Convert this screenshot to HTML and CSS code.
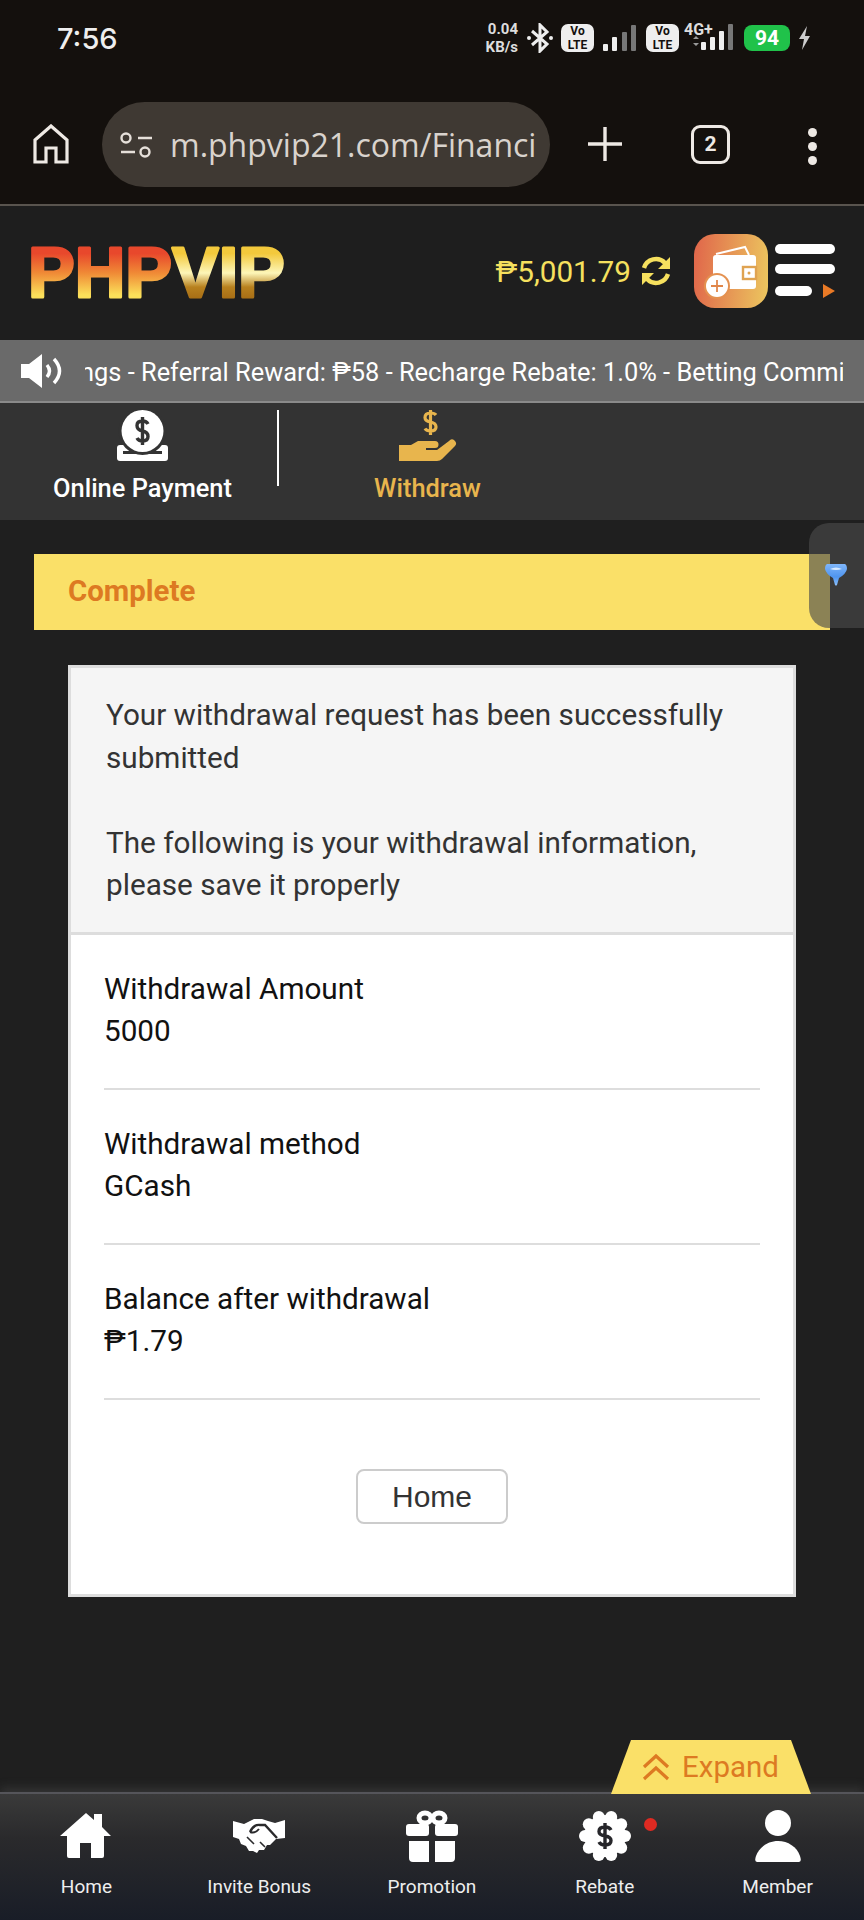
FILE: index.html
```html
<!DOCTYPE html>
<html lang="en">
<head>
<meta charset="UTF-8" />
<meta name="viewport" content="width=device-width, initial-scale=1" />
<title>PHPVIP - Withdraw</title>
<link rel="stylesheet" href="styles.css">
</head>
<body>

<div class="page">

  <!-- Phone status bar -->
  <div class="status-bar">
    <span class="clock">7:56</span>
    <div class="status-icons">
      <span class="net-speed">0.04<br>KB/s</span>
      <svg class="bt" width="28" height="30" viewBox="0 0 28 30"><path d="M6 8 L21 21 L14 28 V2 L21 9 L6 22" fill="none" stroke="#eee" stroke-width="3"/><circle cx="3" cy="15" r="2" fill="#eee"/><circle cx="25" cy="15" r="2" fill="#eee"/></svg>
      <span class="volte">Vo<br>LTE</span>
      <svg class="sig" width="33" height="26" viewBox="0 0 33 26"><rect x="0" y="19" width="5" height="7" rx="1" fill="#eee"/><rect x="9" y="12" width="5" height="14" rx="1" fill="#eee"/><rect x="19" y="7" width="5" height="19" rx="1" fill="#777"/><rect x="28" y="0" width="5" height="26" rx="1" fill="#777"/></svg>
      <span class="volte volte-2">Vo<br>LTE</span>
      <svg class="sig-4g" width="50" height="30" viewBox="0 0 50 30"><text x="0" y="14" class="sig-label">4G+</text><path d="M9 18 l3-3 3 3z M9 22 l3 3 3-3z" fill="#999"/><rect x="17" y="21" width="5" height="8" rx="1" fill="#eee"/><rect x="26" y="16" width="5" height="13" rx="1" fill="#eee"/><rect x="35" y="10" width="5" height="19" rx="1" fill="#eee"/><rect x="44" y="3" width="5" height="26" rx="1" fill="#777"/></svg>
      <span class="battery">94</span>
      <svg class="bolt" width="13" height="24" viewBox="0 0 13 24"><path d="M9 0 L1 13 H6 L4 24 L12 10 H7 Z" fill="#ccc"/></svg>
    </div>
  </div>

  <!-- Browser toolbar -->
  <div class="browser-bar">
    <svg class="b-home" width="36" height="40" viewBox="0 0 36 40"><path d="M2 16 L18 2 L34 16 V38 H23 V24 H13 V38 H2 Z" fill="none" stroke="#eee9e4" stroke-width="3.2"/></svg>
    <div class="url-pill">
      <svg width="32" height="26" viewBox="0 0 32 26"><circle cx="6" cy="6" r="4.5" fill="none" stroke="#e6e0da" stroke-width="2.4"/><path d="M18 6 H32 M1 20 H15" stroke="#e6e0da" stroke-width="2.6"/><circle cx="25" cy="20" r="4.5" fill="none" stroke="#e6e0da" stroke-width="2.4"/></svg>
      <span class="url-text">m.phpvip21.com/Financi</span>
    </div>
    <svg class="b-plus" width="34" height="34" viewBox="0 0 34 34"><path d="M17 0 V34 M0 17 H34" stroke="#eee9e4" stroke-width="3.4" stroke-linecap="round"/></svg>
    <span class="tab-count">2</span>
    <span class="b-dots"><i></i><i></i><i></i></span>
  </div>

  <!-- Site header -->
  <header class="site-header">
    <svg class="logo" width="262" height="84" viewBox="0 0 262 84">
      <defs>
        <linearGradient id="phpGrad" x1="0" y1="0" x2="0" y2="1"><stop offset="0.25" stop-color="#e8482c"/><stop offset="0.5" stop-color="#f08a36"/><stop offset="0.78" stop-color="#fbe05a"/></linearGradient>
        <linearGradient id="vipGrad" x1="0" y1="0" x2="0" y2="1"><stop offset="0.25" stop-color="#f3c93c"/><stop offset="0.5" stop-color="#fdf6b8"/><stop offset="0.68" stop-color="#b8811e"/><stop offset="0.82" stop-color="#a86f16"/></linearGradient>
      </defs>
      <text x="1" y="66" class="logo-text"><tspan fill="url(#phpGrad)" stroke="url(#phpGrad)">PHP</tspan><tspan fill="url(#vipGrad)" stroke="url(#vipGrad)">VIP</tspan></text>
    </svg>
    <div class="balance">₱5,001.79</div>
    <svg class="refresh" width="32" height="32" viewBox="0 0 32 32"><path d="M4 13 A12.5 12.5 0 0 1 25 8 M28 19 A12.5 12.5 0 0 1 7 24" fill="none" stroke="#f6e05e" stroke-width="4.4"/><path d="M30 2 V14 H18 Z M2 30 V18 H14 Z" fill="#f6e05e"/></svg>
    <div class="wallet-btn">
      <svg width="74" height="74" viewBox="0 0 74 74"><rect x="19" y="21" width="43" height="34" rx="3" fill="#fff"/><path d="M22 20 L51 13 L55 21" fill="none" stroke="#fff" stroke-width="2"/><rect x="49" y="33" width="13" height="12" fill="#fff" stroke="#dfa352" stroke-width="2.4"/><circle cx="55" cy="39" r="1.500" fill="#dfa352"/><circle cx="23" cy="52" r="13" fill="#e49150"/><circle cx="23" cy="52" r="11" fill="#fff"/><path d="M23 46 V58 M17 52 H29" stroke="#e0864a" stroke-width="1.8"/></svg>
    </div>
    <div class="menu-btn">
      <span class="menu-line"></span>
      <span class="menu-line"></span>
      <span class="menu-last"><span class="menu-line short"></span><svg width="13" height="14" viewBox="0 0 13 14"><path d="M1 0 L13 7 L1 14 Z" fill="#ea7a26"/></svg></span>
    </div>
  </header>

  <!-- Scrolling notice -->
  <div class="notice">
    <svg width="42" height="34" viewBox="0 0 42 34"><path d="M1 10 H9 L22 0 V34 L9 24 H1 Z" fill="#fff"/><path d="M27 11 Q32 17 27 23 M34 5 Q45 17 34 29" fill="none" stroke="#fff" stroke-width="3.4"/></svg>
    <div class="notice-clip"><span class="notice-text">ngs - Referral Reward: ₱58 - Recharge Rebate: 1.0% - Betting Commi</span></div>
  </div>

  <!-- Payment tabs -->
  <nav class="pay-tabs">
    <div class="pay-tab first">
      <svg width="51" height="51" viewBox="0 0 51 51"><path d="M3 35 H48 a3 3 0 0 1 3 3 V48 a3 3 0 0 1 -3 3 H3 a3 3 0 0 1 -3 -3 V38 a3 3 0 0 1 3 -3 Z" fill="#fff"/><circle cx="25.5" cy="21" r="24" fill="#333"/><rect x="6" y="41" width="39" height="3" fill="#333"/><circle cx="25.5" cy="21" r="21" fill="#fff"/><path d="M31 14 Q29.500 11 25.500 11 Q20 11 20 15.500 Q20 20 25.500 21 Q31 22 31 26.500 Q31 31 25.500 31 Q21.500 31 20 28 M25.500 7 V35" fill="none" stroke="#333" stroke-width="3.4"/></svg>
      <span>Online Payment</span>
    </div>
    <div class="pay-tab active">
      <svg width="58" height="52" viewBox="0 0 58 52"><path d="M37 5 Q35.5 3 31.5 3 Q26 3 26 7.5 Q26 11 31.5 12 Q37 13 37 17 Q37 21 31.5 21 Q27.500 21 26 18.500 M31.500 0 V25" fill="none" stroke="#e8b54d" stroke-width="3.2"/><path d="M0 35 H12 L19 31 H36 a3.500 3.500 0 0 1 0 7 H27 V40 H38 L50 31 a3.500 3.500 0 0 1 6 5 L43 49 Q41 51 38 51 H0 Z" fill="#e8b54d"/></svg>
      <span>Withdraw</span>
    </div>
  </nav>

  <main class="content">
    <div class="step-bar">Complete</div>

    <section class="card">
      <div class="card-head">
        <p>Your withdrawal request has been successfully submitted</p>
        <p>The following is your withdrawal information, please save it properly</p>
      </div>
      <div class="card-body">
        <div class="info-row">Withdrawal Amount<br>5000</div>
        <div class="info-row">Withdrawal method<br>GCash</div>
        <div class="info-row">Balance after withdrawal<br>₱1.79</div>
        <div class="btn-row"><button class="btn-home">Home</button></div>
      </div>
    </section>

    <!-- Floating side tab -->
    <div class="side-tab">
      <svg width="24" height="24" viewBox="0 0 24 24"><defs><linearGradient id="gemGrad" x1="0" y1="0" x2="0" y2="1"><stop offset="0" stop-color="#7fb6fa"/><stop offset="0.6" stop-color="#4f94ee"/><stop offset="1" stop-color="#8cc0fb"/></linearGradient></defs><path d="M3 1 H21 Q23 2 23 6 Q22 11 15 15 L13 22 Q12 23 11 22 L9 15 Q2 11 1 6 Q1 2 3 1 Z" fill="url(#gemGrad)"/><path d="M6 6 Q12 3 18 6 Q12 8 6 6 Z" fill="#d5e8ff"/></svg>
    </div>
  </main>

  <!-- Bottom navigation -->
  <footer class="bottom-nav">
    <div class="expand-tab">
      <svg width="28" height="28" viewBox="0 0 28 28"><path d="M2 14 L14 3 L26 14 M2 26 L14 15 L26 26" fill="none" stroke="#dd7a22" stroke-width="3.2"/></svg>
      <span>Expand</span>
    </div>
    <div class="nav-item">
      <svg width="52" height="52" viewBox="0 0 52 46"><path d="M26 0 L34 7 V1 H42 V14 L51 23 H44 V43 Q44 45 42 45 H31 V30 H20 V45 H9 Q7 45 7 43 V23 H0 Z" fill="#fff"/></svg>
      <span>Home</span>
    </div>
    <div class="nav-item">
      <svg width="52" height="52" viewBox="0 -8 52 52"><path d="M0 3 L11 6 L21 1 H29 L35 3 L42 5 L52 2 V20 L43 21 L37 27 L34 27 L31 32 L26 32 L24 35 L20 33 L16 33 L13 28 L8 26 L6 21 L0 19 Z" fill="#fff"/><path d="M17 14 Q21 6 27 7 H32 L44 20" fill="none" stroke="#2a2a2c" stroke-width="2.4"/><path d="M17 14 Q22 16 26 11" fill="none" stroke="#2a2a2c" stroke-width="2"/><path d="M14 19 L21 26 M27 24 L32 29" stroke="#2a2a2c" stroke-width="1.6"/></svg>
      <span>Invite Bonus</span>
    </div>
    <div class="nav-item">
      <svg width="52" height="52" viewBox="0 0 52 52"><ellipse cx="19" cy="8" rx="6" ry="5" fill="none" stroke="#fff" stroke-width="5"/><ellipse cx="33" cy="8" rx="6" ry="5" fill="none" stroke="#fff" stroke-width="5"/><rect x="0" y="14" width="23" height="12" rx="3" fill="#fff"/><rect x="29" y="14" width="23" height="12" rx="3" fill="#fff"/><path d="M3 31 H23 V52 H7 Q3 52 3 48 Z M29 31 H49 V48 Q49 52 45 52 H29 Z" fill="#fff"/></svg>
      <span>Promotion</span>
    </div>
    <div class="nav-item rebate">
      <svg width="52" height="52" viewBox="0 0 52 52"><circle cx="26" cy="26" r="21" fill="#fff"/><g fill="#fff"><circle cx="46" cy="26" r="6"/><circle cx="42.200" cy="37.800" r="6"/><circle cx="32.200" cy="45" r="6"/><circle cx="19.800" cy="45" r="6"/><circle cx="9.800" cy="37.800" r="6"/><circle cx="6" cy="26" r="6"/><circle cx="9.800" cy="14.200" r="6"/><circle cx="19.800" cy="7" r="6"/><circle cx="32.200" cy="7" r="6"/><circle cx="42.200" cy="14.200" r="6"/></g><path d="M32 20 Q30.500 17 26 17 Q20 17 20 21.500 Q20 25 26 26 Q32 27 32 30.500 Q32 35 26 35 Q21.500 35 20 32 M26 13 V39" fill="none" stroke="#26262a" stroke-width="3.4"/></svg>
      <i class="red-dot"></i>
      <span>Rebate</span>
    </div>
    <div class="nav-item">
      <svg width="52" height="52" viewBox="0 0 52 52"><circle cx="26" cy="13" r="13" fill="#fff"/><path d="M5 52 Q2 52 4 46 C7 37 16 31 26 31 C36 31 45 37 48 46 Q50 52 47 52 Z" fill="#fff"/></svg>
      <span>Member</span>
    </div>
  </footer>

</div>

</body>
</html>
```

FILE: styles.css
```css
* {
  margin: 0;
  padding: 0;
  box-sizing: border-box;
}

body {
  font-family: Roboto, 'Liberation Sans', sans-serif;
  background: #1f1f1f;
}

svg { flex-shrink: 0; }

.page {
  width: 864px;
  height: 1920px;
  display: flex;
  flex-direction: column;
  overflow: hidden;
}

/* Status bar */
.status-bar {
  height: 76px;
  flex-shrink: 0;
  background: #14100d;
  display: flex;
  align-items: center;
  padding: 0 0 0 57px;
  justify-content: space-between;
}

.clock {
  color: #eee;
  font-size: 29px;
  font-weight: 500;
  font-family: Inter, Roboto, sans-serif;
}

.status-icons {
  display: flex;
  align-items: center;
  margin-right: 53px;
}

.net-speed {
  color: #ddd;
  font-size: 15px;
  line-height: 18px;
  font-weight: 700;
  text-align: right;
  width: 38px;
  margin-right: 8px;
}

.bt { margin-right: 7px; }

.volte {
  width: 33px;
  height: 28px;
  border-radius: 7px;
  background: #eee;
  color: #14100d;
  font-size: 12px;
  line-height: 14px;
  font-weight: 700;
  text-align: center;
  margin-right: 9px;
}

.sig { margin-right: 10px; }

.volte.volte-2 { margin-right: 5px; }

.sig-4g { margin-right: 10px; margin-top: -5px; }

.sig-label {
  fill: #ddd;
  font-size: 16px;
  font-weight: 700;
}

.battery {
  width: 46px;
  height: 26px;
  border-radius: 8px;
  background: #20c24a;
  color: #fff;
  font-size: 21px;
  line-height: 26px;
  font-weight: 700;
  text-align: center;
  margin-right: 8px;
}

/* Browser bar */
.browser-bar {
  height: 130px;
  flex-shrink: 0;
  background: #14100d;
  border-bottom: 2px solid #59544e;
  display: flex;
  align-items: flex-start;
  padding: 26px 0 0 33px;
}

.b-home { margin: 22px 33px 0 0; }

.url-pill {
  width: 448px;
  height: 85px;
  border-radius: 43px;
  background: #3f3933;
  display: flex;
  align-items: center;
  padding-left: 18px;
  gap: 18px;
  flex-shrink: 0;
}

.url-text {
  color: #d9d3cd;
  font-family: 'Open Sans', Roboto, sans-serif;
  font-size: 32px;
  white-space: nowrap;
}

.b-plus { margin: 25px 0 0 38px; }

.tab-count {
  width: 39px;
  height: 39px;
  margin: 23px 0 0 69px;
  border: 3px solid #eee9e4;
  border-radius: 9px;
  color: #eee9e4;
  font-size: 21px;
  font-weight: 700;
  line-height: 33px;
  text-align: center;
}

.b-dots {
  display: flex;
  flex-direction: column;
  gap: 5px;
  margin: 26px 0 0 78px;
}

.b-dots i {
  width: 9px;
  height: 9px;
  border-radius: 50%;
  background: #eee9e4;
}

/* Site header */
.site-header {
  height: 134px;
  flex-shrink: 0;
  background: #1e1e1e;
  display: flex;
  align-items: center;
  padding: 0 29px 0 31px;
}

.logo { margin-left: -4px; }

.logo-text {
  font-family: 'Liberation Sans', Arial, sans-serif;
  font-size: 70px;
  font-weight: 700;
  stroke-width: 3px;
  stroke-linejoin: round;
}

.balance {
  margin-left: auto;
  color: #f6e05e;
  font-size: 29.7px;
  margin-top: -4px;
}

.refresh { margin: -4px 22px 0 9px; }

.wallet-btn {
  width: 74px;
  height: 74px;
  border-radius: 21px;
  background: linear-gradient(95deg, #e0654a, #ecc75f);
  margin-top: -5px;
}

.menu-btn {
  width: 60px;
  margin: -5px 0 0 7px;
  display: flex;
  flex-direction: column;
  gap: 10px;
}

.menu-line {
  display: block;
  height: 10px;
  border-radius: 5px;
  background: #fff;
}

.menu-last {
  display: flex;
  align-items: center;
  justify-content: space-between;
}

.menu-line.short { width: 37px; }

/* Notice */
.notice {
  height: 63px;
  flex-shrink: 0;
  background: #6a6a6a;
  border-bottom: 2px solid #8a8a8a;
  display: flex;
  align-items: center;
  padding: 0 21px 0 20px;
  gap: 23px;
}

.notice-clip {
  flex: 1;
  overflow: hidden;
  white-space: nowrap;
  padding-top: 2px;
}

.notice-text {
  display: inline-block;
  color: #fff;
  font-size: 25.4px;
  margin-left: -5px;
}

/* Payment tabs */
.pay-tabs {
  height: 117px;
  flex-shrink: 0;
  background: #333;
  display: flex;
  padding-top: 7px;
  align-items: flex-start;
}

.pay-tab {
  display: flex;
  flex-direction: column;
  align-items: center;
  gap: 12px;
  color: #fff;
  font-size: 25.4px;
  font-weight: 500;
  white-space: nowrap;
}

.pay-tab.first {
  width: 279px;
  padding-left: 8px;
  height: 76px;
  border-right: 2px solid #fff;
}

.pay-tab.active {
  width: 297px;
  gap: 11px;
  color: #e8b54d;
}

/* Content */
.content {
  position: relative;
  flex: 1;
  padding-top: 34px;
}

.step-bar {
  margin-left: 34px;
  width: 796px;
  height: 76px;
  padding-left: 34px;
  background: #fae068;
  color: #dd7a22;
  font-size: 29.4px;
  font-weight: 700;
  line-height: 74px;
}

.card {
  margin: 35px 0 0 68px;
  width: 728px;
  background: #fff;
  border: 3px solid #ddd;
}

.card-head {
  background: #f5f5f5;
  border-bottom: 3px solid #ddd;
  padding: 26px 30px 25.5px 35px;
  color: #333;
  font-size: 29.7px;
  line-height: 42.5px;
}

.card-head p + p { margin-top: 42.5px; }

.card-body {
  padding: 0 33px;
}

.info-row {
  padding: 33px 0 36px;
  border-bottom: 2px solid #ddd;
  color: #111;
  font-size: 29.7px;
  line-height: 42px;
}

.btn-row {
  display: flex;
  justify-content: center;
  padding: 69px 0 70px;
}

.btn-home {
  width: 152px;
  height: 55px;
  background: #fff;
  border: 2px solid #ccc;
  border-radius: 8px;
  color: #333;
  font-family: 'Liberation Sans', Arial, sans-serif;
  font-size: 30px;
}

.side-tab {
  position: absolute;
  top: 3px;
  right: 0;
  width: 55px;
  height: 105px;
  border-radius: 20px 0 0 20px;
  background: rgba(74, 74, 74, 0.63);
  padding: 40px 0 0 15px;
}

/* Bottom nav */
.bottom-nav {
  position: relative;
  height: 128px;
  flex-shrink: 0;
  background: linear-gradient(180deg, #3a3a3a 0%, #2a2a2c 35%, #191d27 100%);
  border-top: 2px solid #55555a;
  box-shadow: 0 -4px 10px rgba(120, 120, 120, 0.25);
  display: grid;
  grid-template-columns: repeat(5, 1fr);
}

.nav-item {
  position: relative;
  display: flex;
  flex-direction: column;
  align-items: center;
  padding-top: 16px;
  gap: 13px;
  color: #eee;
  font-size: 19px;
}

.red-dot {
  position: absolute;
  top: 24px;
  left: 126px;
  width: 13px;
  height: 13px;
  border-radius: 50%;
  background: #df2a22;
}

.expand-tab {
  position: absolute;
  right: 53px;
  bottom: 100%;
  width: 200px;
  height: 54px;
  background: #fae068;
  clip-path: polygon(10% 0, 90% 0, 100% 100%, 0 100%);
  display: flex;
  align-items: center;
  gap: 12px;
  padding-left: 31px;
  color: #dd7a22;
  font-size: 29.5px;
}
```
